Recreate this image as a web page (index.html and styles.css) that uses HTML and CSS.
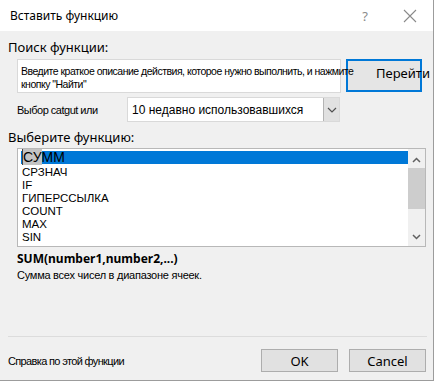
FILE: index.html
```html
<!DOCTYPE html>
<html lang="ru">
<head>
    <meta charset="UTF-8">
    <title>Вставить функцию</title>
    <link rel="stylesheet" href="styles.css">
</head>
<body>
    <div class="dialog">
        <div class="titlebar">
            <span class="title">Вставить функцию</span>
            <span class="help">?</span>
            <span class="close">
                <svg width="14" height="14" viewBox="0 0 14 14"><path d="M1 1L13 13M13 1L1 13" stroke="#8a8a8a" stroke-width="1.1" fill="none"/></svg>
            </span>
        </div>
        <div class="content">
            <div class="label-big">Поиск функции:</div>
            <div class="search-row">
                <div class="search-box">Введите краткое описание действия, которое нужно выполнить, и нажмите<br>кнопку "Найти"</div>
                <button class="go-btn">Перейти</button>
            </div>
            <div class="category-row">
                <span class="category-label">Выбор catgut или</span>
                <div class="select">
                    <span class="select-text">10 недавно использовавшихся</span>
                    <span class="select-btn">
                        <svg width="10" height="6" viewBox="0 0 10 6"><path d="M1 1L5 5L9 1" stroke="#505050" stroke-width="1.2" fill="none"/></svg>
                    </span>
                </div>
            </div>
            <div class="label-big">Выберите функцию:</div>
            <div class="listbox">
                <ul class="items">
                    <li class="selected"><span class="caret">СУ</span>ММ</li>
                    <li>СРЗНАЧ</li>
                    <li>IF</li>
                    <li>ГИПЕРССЫЛКА</li>
                    <li>COUNT</li>
                    <li>MAX</li>
                    <li>SIN</li>
                </ul>
                <div class="scrollbar">
                    <svg width="9" height="6" viewBox="0 0 9 6"><path d="M1 5L4.5 1.5L8 5" stroke="#606060" stroke-width="1.5" fill="none"/></svg>
                    <div class="thumb"></div>
                    <svg class="down" width="9" height="6" viewBox="0 0 9 6"><path d="M1 1L4.5 4.5L8 1" stroke="#606060" stroke-width="1.5" fill="none"/></svg>
                </div>
            </div>
            <div class="signature">SUM(number1,number2,...)</div>
            <div class="description">Сумма всех чисел в диапазоне ячеек.</div>
            <div class="separator"></div>
            <div class="footer">
                <span class="help-link">Справка по этой функции</span>
                <button class="btn">OK</button>
                <button class="btn">Cancel</button>
            </div>
        </div>
    </div>
</body>
</html>
```

FILE: styles.css
```css
body {
    margin: 0;
    font-family: "Noto Sans", "Liberation Sans", sans-serif;
    color: #000;
}
.dialog {
    width: 434px;
    height: 381px;
    box-sizing: border-box;
    border: 1px solid #9c9c9c;
    border-top: none;
    border-left: none;
    background-color: #f0f0f0;
    display: flex;
    flex-direction: column;
}
.titlebar {
    height: 31px;
    background-color: #fff;
    display: flex;
    align-items: center;
    padding-left: 10px;
}
.title {
    font-size: 12px;
    flex: 1;
}
.help {
    color: #8a8a8a;
    font-size: 13px;
    margin-right: 35px;
}
.close {
    display: flex;
    margin-right: 16px;
}
.content {
    padding: 8px 0 0 8px;
    flex: 1;
    display: flex;
    flex-direction: column;
}
.label-big {
    font-size: 13px;
    line-height: 17px;
}
.search-row {
    display: flex;
    margin: 3px 0 0 9px;
}
.search-box {
    width: 319px;
    background-color: #fff;
    border: 1px solid #d9d9d9;
    font-family: "Liberation Sans", sans-serif;
    font-size: 10.5px;
    letter-spacing: -0.5px;
    line-height: 13px;
    white-space: nowrap;
    padding: 5px 0 0 3px;
    height: 27px;
    position: relative;
    z-index: 1;
}
.go-btn {
    width: 76px;
    height: 33px;
    margin-left: 5px;
    border: 2px solid #0078d7;
    background-color: #e5e5e5;
    font-family: "Noto Sans", sans-serif;
    font-size: 13px;
    padding: 0 0 6px 0;
    white-space: nowrap;
    overflow: visible;
    text-indent: 28px;
    text-align: left;
}
.category-row {
    display: flex;
    align-items: center;
    margin: 4px 0 0 9px;
    height: 25px;
}
.category-label {
    font-family: "Liberation Sans", sans-serif;
    font-size: 11px;
    letter-spacing: -0.5px;
    width: 110px;
}
.select {
    width: 211px;
    height: 23px;
    background-color: #fff;
    border: 1px solid #d9d9d9;
    display: flex;
    align-items: center;
}
.select-text {
    flex: 1;
    font-family: "Liberation Sans", sans-serif;
    font-size: 12px;
    padding-left: 4px;
}
.select-btn {
    width: 15px;
    height: 23px;
    background-color: #e1e1e1;
    border-left: 1px solid #b4b4b4;
    display: flex;
    align-items: center;
    justify-content: center;
}
.content > .label-big + .listbox {
    margin-top: 2px;
}
.category-row + .label-big {
    margin-top: 7px;
}
.listbox {
    margin-left: 9px;
    width: 409px;
    height: 99px;
    box-sizing: border-box;
    border: 1px solid #b8b8b8;
    background-color: #fff;
    display: flex;
}
.items {
    list-style: none;
    margin: 0;
    padding: 2px 0 0 3px;
    flex: 1;
    font-family: "Liberation Sans", sans-serif;
    font-size: 11.5px;
    line-height: 13px;
}
.items li {
    padding-left: 1px;
}
.items li.selected {
    background-color: #0078d7;
    font-size: 14px;
    line-height: 13px;
    height: 13px;
    margin-bottom: 2px;
}
.caret {
    background-color: #c3c3c3;
    border-left: 1px solid #444;
}
.scrollbar {
    width: 17px;
    background-color: #f0f0f0;
    display: flex;
    flex-direction: column;
    align-items: center;
    padding-top: 8px;
}
.thumb {
    width: 17px;
    height: 41px;
    background-color: #cdcdcd;
    margin-top: 5px;
}
.scrollbar .down {
    margin-top: auto;
    margin-bottom: 6px;
}
.signature {
    font-family: "Noto Sans", sans-serif;
    font-weight: bold;
    font-size: 12px;
    margin: 3px 0 0 9px;
}
.description {
    font-family: "Liberation Sans", sans-serif;
    font-size: 11px;
    letter-spacing: -0.25px;
    margin: 2px 0 0 9px;
}
.separator {
    margin-top: auto;
    width: 419px;
    border-top: 1px solid #dcdcdc;
}
.footer {
    display: flex;
    align-items: center;
    margin: 12px 0 8px 0;
}
.help-link {
    flex: 1;
    font-family: "Liberation Sans", sans-serif;
    font-size: 11px;
    letter-spacing: -0.65px;
}
.btn {
    width: 77px;
    height: 23px;
    margin-right: 11px;
    border: 1px solid #adadad;
    background-color: #e1e1e1;
    font-family: "Noto Sans", sans-serif;
    font-size: 13px;
    padding: 0;
}
.btn:last-child {
    margin-right: 7px;
}
```
